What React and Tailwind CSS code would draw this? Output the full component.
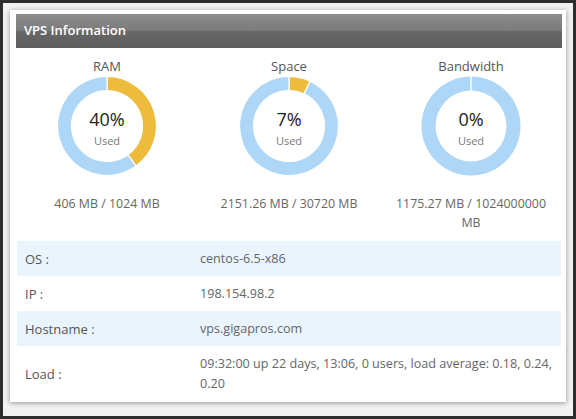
import React from "react";

const stats = [
  { title: "RAM", percent: 40, detail: "406 MB / 1024 MB" },
  { title: "Space", percent: 7, detail: "2151.26 MB / 30720 MB" },
  { title: "Bandwidth", percent: 0, detail: "1175.27 MB / 1024000000 MB" },
];

const rows = [
  { label: "OS :", value: "centos-6.5-x86" },
  { label: "IP :", value: "198.154.98.2" },
  { label: "Hostname :", value: "vps.gigapros.com" },
  {
    label: "Load :",
    value: "09:32:00 up 22 days, 13:06, 0 users, load average: 0.18, 0.24, 0.20",
  },
];

// ring slice, angles in degrees clockwise from 12 o'clock
const slice = (a0, a1, R = 49.5, r = 35.5, c = 50) => {
  const p = (rad, a) => {
    const t = (a * Math.PI) / 180;
    return `${(c + rad * Math.sin(t)).toFixed(3)} ${(c - rad * Math.cos(t)).toFixed(3)}`;
  };
  const large = a1 - a0 > 180 ? 1 : 0;
  return `M ${p(R, a0)} A ${R} ${R} 0 ${large} 1 ${p(R, a1)} L ${p(r, a1)} A ${r} ${r} 0 ${large} 0 ${p(r, a0)} Z`;
};

const Donut = ({ percent }) => {
  const used = (percent / 100) * 360;
  return (
    <svg width="100" height="100" viewBox="0 0 100 100">
      {used > 0 ? (
        <>
          <path d={slice(0, used)} fill="#edbc3c" stroke="#fff" strokeWidth="1.2" />
          <path d={slice(used, 360 - 0.001)} fill="#aed6f6" stroke="#fff" strokeWidth="1.2" />
        </>
      ) : (
        <>
          <path d={slice(0, 180)} fill="#aed6f6" />
          <path d={slice(180, 360)} fill="#aed6f6" />
          <line x1="50" y1="0" x2="50" y2="15" stroke="#fff" strokeWidth="1.4" />
        </>
      )}
    </svg>
  );
};

const StatCard = ({ title, percent, detail }) => (
  <div className="flex flex-col items-center px-4 text-center">
    <div className="mt-[10px] text-[13px] leading-[17px] text-[#555]">{title}</div>
    <div className="relative mt-[1px] h-[100px] w-[100px]">
      <Donut percent={percent} />
      <div className="absolute inset-0 flex flex-col items-center pt-[32px]">
        <span className="text-[18px] leading-[22px] text-[#222]">{percent}%</span>
        <span className="mt-[4px] text-[11px] leading-[14px] text-[#777]">Used</span>
      </div>
    </div>
    <div className="mt-[18px] text-[12.4px] leading-[19px] text-[#666]">{detail}</div>
  </div>
);

export default function App() {
  return (
    <div
      className="h-[419px] w-[576px] overflow-hidden border-[3px] border-[#2d2d2d] bg-[#f2f2f2] p-[7px]"
      style={{ fontFamily: '"Open Sans", "Noto Sans", sans-serif' }}
    >
      <div className="bg-white pb-[1px] pl-[6px] pr-[4px] pt-[4px] shadow-[0_1px_5px_rgba(0,0,0,0.4)]">
        <div className="flex h-[34px] items-center bg-[linear-gradient(to_bottom,#8d8d8d_0%,#7b7b7b_48%,#676767_52%,#5d5d5d_100%)] px-[8px] text-[13px] font-semibold text-white">
          VPS Information
        </div>

        <div className="grid grid-cols-3">
          {stats.map((s) => (
            <StatCard key={s.title} {...s} />
          ))}
        </div>

        <div className="mx-[1px] mt-[9px]">
          {rows.map((r, i) => (
            <div
              key={r.label}
              className={`flex min-h-[35px] items-center py-[7.5px] leading-[20px] ${
                i % 2 === 0 ? "bg-[#eaf4fd]" : "bg-white"
              }`}
            >
              <div className="w-[183px] shrink-0 pl-[8px] text-[13px] text-[#555]">{r.label}</div>
              <div className="pr-[8px] text-[12.6px] text-[#666]">{r.value}</div>
            </div>
          ))}
        </div>
      </div>
    </div>
  );
}
